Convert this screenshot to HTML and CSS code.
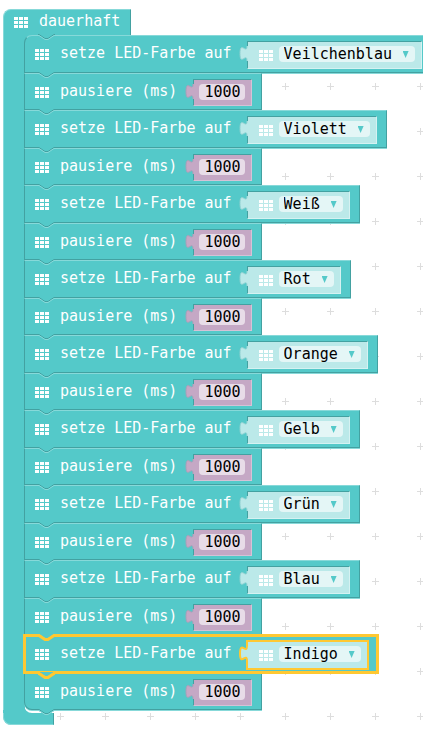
FILE: index.html
```html
<!DOCTYPE html>
<html lang="de">
<head>
<meta charset="utf-8">
<meta name="viewport" content="width=device-width, initial-scale=1">
<title>Blockeditor</title>
<link rel="stylesheet" href="styles.css">
</head>
<body>
<svg class="grid" aria-hidden="true">
  <defs>
    <pattern id="crosses" x="-7" y="-26" width="45" height="45" patternUnits="userSpaceOnUse">
      <path d="M19 22.500h7M22.500 19v7" stroke="#ddd"/>
    </pattern>
    <symbol id="matrix" viewBox="0 0 14 11">
      <path fill="#fff" d="M0 0h4v3H0zM5 0h4v3H5zM10 0h4v3h-4zM0 4h4v3H0zM5 4h4v3H5zM10 4h4v3h-4zM0 8h4v3H0zM5 8h4v3H5zM10 8h4v3h-4z"/>
    </symbol>
    <symbol id="notch" viewBox="0 0 17 9">
      <path class="notch-fill" d="M0 0v2h1l6 4h3l6-4h1V0z"/>
      <path class="notch-dark" d="M0 .5h1l6 4h3l6-4h1"/>
      <path class="notch-light" d="M0 1.500h1l6 4h3l6-4h1"/>
    </symbol>
    <symbol id="tab" viewBox="0 0 12 19">
      <path class="tab-fill" d="M10 2C10 11 3-4 3 9.500s7-2 7 7.500h2V2z"/>
      <path class="tab-edge" d="M10 2C10 11 3-4 3 9.500s7-2 7 7.500"/>
    </symbol>
  </defs>
  <rect width="100%" height="100%" fill="url(#crosses)"/>
</svg>
<main class="workspace">
  <section class="loop">
    <h1 class="head"><svg class="icon"><use href="#matrix"/></svg><span class="text">dauerhaft</span></h1>
    <ol class="stack">
      <li class="block color">
        <svg class="notch"><use href="#notch"/></svg><svg class="icon"><use href="#matrix"/></svg>
        <label class="text" for="c1">setze LED-Farbe auf</label>
        <span class="value"><svg class="tab"><use href="#tab"/></svg><svg class="icon"><use href="#matrix"/></svg><span class="drop"><select id="c1"><option>Veilchenblau</option></select></span></span>
      </li>
      <li class="block pause">
        <svg class="notch"><use href="#notch"/></svg><svg class="icon"><use href="#matrix"/></svg>
        <label class="text" for="p1">pausiere (ms)</label>
        <span class="value"><svg class="tab"><use href="#tab"/></svg><input id="p1" type="text" value="1000"></span>
      </li>
      <li class="block color">
        <svg class="notch"><use href="#notch"/></svg><svg class="icon"><use href="#matrix"/></svg>
        <label class="text" for="c2">setze LED-Farbe auf</label>
        <span class="value"><svg class="tab"><use href="#tab"/></svg><svg class="icon"><use href="#matrix"/></svg><span class="drop"><select id="c2"><option>Violett</option></select></span></span>
      </li>
      <li class="block pause">
        <svg class="notch"><use href="#notch"/></svg><svg class="icon"><use href="#matrix"/></svg>
        <label class="text" for="p2">pausiere (ms)</label>
        <span class="value"><svg class="tab"><use href="#tab"/></svg><input id="p2" type="text" value="1000"></span>
      </li>
      <li class="block color">
        <svg class="notch"><use href="#notch"/></svg><svg class="icon"><use href="#matrix"/></svg>
        <label class="text" for="c3">setze LED-Farbe auf</label>
        <span class="value"><svg class="tab"><use href="#tab"/></svg><svg class="icon"><use href="#matrix"/></svg><span class="drop"><select id="c3"><option>Weiß</option></select></span></span>
      </li>
      <li class="block pause">
        <svg class="notch"><use href="#notch"/></svg><svg class="icon"><use href="#matrix"/></svg>
        <label class="text" for="p3">pausiere (ms)</label>
        <span class="value"><svg class="tab"><use href="#tab"/></svg><input id="p3" type="text" value="1000"></span>
      </li>
      <li class="block color">
        <svg class="notch"><use href="#notch"/></svg><svg class="icon"><use href="#matrix"/></svg>
        <label class="text" for="c4">setze LED-Farbe auf</label>
        <span class="value"><svg class="tab"><use href="#tab"/></svg><svg class="icon"><use href="#matrix"/></svg><span class="drop"><select id="c4"><option>Rot</option></select></span></span>
      </li>
      <li class="block pause">
        <svg class="notch"><use href="#notch"/></svg><svg class="icon"><use href="#matrix"/></svg>
        <label class="text" for="p4">pausiere (ms)</label>
        <span class="value"><svg class="tab"><use href="#tab"/></svg><input id="p4" type="text" value="1000"></span>
      </li>
      <li class="block color">
        <svg class="notch"><use href="#notch"/></svg><svg class="icon"><use href="#matrix"/></svg>
        <label class="text" for="c5">setze LED-Farbe auf</label>
        <span class="value"><svg class="tab"><use href="#tab"/></svg><svg class="icon"><use href="#matrix"/></svg><span class="drop"><select id="c5"><option>Orange</option></select></span></span>
      </li>
      <li class="block pause">
        <svg class="notch"><use href="#notch"/></svg><svg class="icon"><use href="#matrix"/></svg>
        <label class="text" for="p5">pausiere (ms)</label>
        <span class="value"><svg class="tab"><use href="#tab"/></svg><input id="p5" type="text" value="1000"></span>
      </li>
      <li class="block color">
        <svg class="notch"><use href="#notch"/></svg><svg class="icon"><use href="#matrix"/></svg>
        <label class="text" for="c6">setze LED-Farbe auf</label>
        <span class="value"><svg class="tab"><use href="#tab"/></svg><svg class="icon"><use href="#matrix"/></svg><span class="drop"><select id="c6"><option>Gelb</option></select></span></span>
      </li>
      <li class="block pause">
        <svg class="notch"><use href="#notch"/></svg><svg class="icon"><use href="#matrix"/></svg>
        <label class="text" for="p6">pausiere (ms)</label>
        <span class="value"><svg class="tab"><use href="#tab"/></svg><input id="p6" type="text" value="1000"></span>
      </li>
      <li class="block color">
        <svg class="notch"><use href="#notch"/></svg><svg class="icon"><use href="#matrix"/></svg>
        <label class="text" for="c7">setze LED-Farbe auf</label>
        <span class="value"><svg class="tab"><use href="#tab"/></svg><svg class="icon"><use href="#matrix"/></svg><span class="drop"><select id="c7"><option>Grün</option></select></span></span>
      </li>
      <li class="block pause">
        <svg class="notch"><use href="#notch"/></svg><svg class="icon"><use href="#matrix"/></svg>
        <label class="text" for="p7">pausiere (ms)</label>
        <span class="value"><svg class="tab"><use href="#tab"/></svg><input id="p7" type="text" value="1000"></span>
      </li>
      <li class="block color">
        <svg class="notch"><use href="#notch"/></svg><svg class="icon"><use href="#matrix"/></svg>
        <label class="text" for="c8">setze LED-Farbe auf</label>
        <span class="value"><svg class="tab"><use href="#tab"/></svg><svg class="icon"><use href="#matrix"/></svg><span class="drop"><select id="c8"><option>Blau</option></select></span></span>
      </li>
      <li class="block pause">
        <svg class="notch"><use href="#notch"/></svg><svg class="icon"><use href="#matrix"/></svg>
        <label class="text" for="p8">pausiere (ms)</label>
        <span class="value"><svg class="tab"><use href="#tab"/></svg><input id="p8" type="text" value="1000"></span>
      </li>
      <li class="block color selected">
        <svg class="notch"><use href="#notch"/></svg><svg class="notch lower"><use href="#notch"/></svg><svg class="icon"><use href="#matrix"/></svg>
        <label class="text" for="c9">setze LED-Farbe auf</label>
        <span class="value"><svg class="tab"><use href="#tab"/></svg><svg class="icon"><use href="#matrix"/></svg><span class="drop"><select id="c9"><option>Indigo</option></select></span></span>
      </li>
      <li class="block pause">
        <svg class="notch"><use href="#notch"/></svg><svg class="notch lower"><use href="#notch"/></svg><svg class="icon"><use href="#matrix"/></svg>
        <label class="text" for="p9">pausiere (ms)</label>
        <span class="value"><svg class="tab"><use href="#tab"/></svg><input id="p9" type="text" value="1000"></span>
      </li>
    </ol>
    <div class="foot"><svg class="corner" viewBox="0 0 8 8"><path d="M0 0v8h8a8 8 0 0 1-8-8z"/></svg></div>
  </section>
</main>
</body>
</html>
```
FILE: styles.css
```css
* { box-sizing: border-box; }

body {
  --teal: #54c9c9;
  --teal-light: #87d9d9;
  --teal-dark: #43a1a1;
  --select: #ffc832;
  margin: 0;
  font: 15px/18px "DejaVu Sans Mono", monospace;
  color: #fff;
  background: #fff;
}

.grid {
  position: absolute;
  inset: 0;
  width: 100%;
  height: 100%;
}

.workspace {
  position: relative;
  min-height: 100vh;
  padding: 9px 0 7px 3px;
  overflow: hidden;
}

.loop { width: max-content; }

.icon {
  flex: none;
  display: block;
  width: 14px;
  height: 11px;
}

.head {
  display: flex;
  align-items: flex-start;
  gap: 11px;
  width: max-content;
  height: 26px;
  margin: 0;
  padding: 0 10px;
  font: inherit;
  background: var(--teal);
  border-top: 1px solid var(--teal-light);
  border-left: 1px solid var(--teal-light);
  border-right: 1px solid var(--teal-dark);
  border-top-left-radius: 8px;
}
.head .icon { margin-top: 7px; }
.head .text { margin-top: 2px; }

.stack {
  position: relative;
  margin: 0;
  padding: 0 0 0 21px;
  list-style: none;
}
.stack::before {
  content: "";
  position: absolute;
  inset: 0 auto 0 0;
  width: 21px;
  background: var(--teal);
  border-left: 1px solid var(--teal-light);
}

/* statement block */
.block {
  --notch-dark: var(--teal-dark);
  --notch-light: var(--teal-light);
  --notch-width: 1px;
  position: relative;
  z-index: 1;
  display: flex;
  align-items: flex-start;
  width: max-content;
  padding: 6px 10px 0 11px;
  background: var(--teal);
  box-shadow: 0 1px var(--teal-light);
}
.block::before {
  content: "";
  position: absolute;
  inset: 0;
  border: 1px solid var(--teal-dark);
  border-top-color: var(--teal-light);
}
.color { height: 38px; }
.pause { height: 37px; }
.block:first-child::before { border-top-left-radius: 8px; }
.block:last-child,
.block:last-child::before { border-bottom-left-radius: 8px; }

.block > .icon { margin: 8px 11px 0 0; }
.block > .text { margin-top: 3px; }

.notch {
  position: absolute;
  top: -1px;
  left: 14px;
  width: 17px;
  height: 9px;
}
.notch.lower { top: auto; bottom: -8px; z-index: 1; }
.notch-fill { fill: var(--teal); }
.notch-dark, .notch-light { fill: none; }
.notch-dark { stroke: var(--notch-dark); }
.notch-light { stroke: var(--notch-light); stroke-width: var(--notch-width); }

/* value block plugged into a statement */
.value {
  --plug: #bbe9e9;
  --plug-edge: #93d2d2;
  --plug-line: 1px;
  position: relative;
  display: flex;
  align-items: flex-start;
  height: 28px;
  margin-left: 15px;
  padding: 4px 6px 0 11px;
  background: var(--plug);
  border: 1px solid #d5f2f2;
  border-top-color: var(--teal-dark);
  border-left-color: var(--teal-dark);
}
.value .icon { margin: 4px 6px 0 0; }
.pause .value {
  --plug: #c5a8c5;
  --plug-edge: #a9a0b9;
  height: 27px;
  margin-left: 16px;
  padding-left: 5px;
  border-right-color: #d6c2d6;
  border-bottom-color: #d6c2d6;
}

.tab {
  position: absolute;
  top: 2px;
  left: -11px;
  width: 12px;
  height: 19px;
}
.tab-fill { fill: var(--plug); }
.tab-edge { fill: none; stroke: var(--plug-edge); stroke-width: var(--plug-line); }

select, input {
  display: block;
  height: 16px;
  margin: 0;
  padding: 0 5px;
  border: 0;
  border-radius: 4px;
  outline: 0;
  font: inherit;
  line-height: 16px;
  color: #000;
}
input { width: 46px; background: #e8dce8; }
select {
  appearance: none;
  padding-right: 22px;
  background: #e4f6f6;
}
.drop { position: relative; }
.drop::after {
  content: "";
  position: absolute;
  top: 5px;
  right: 6px;
  width: 6px;
  height: 7px;
  background: var(--teal);
  clip-path: polygon(0 0, 100% 0, 50% 100%);
  pointer-events: none;
}

/* selected block */
.selected {
  --notch-dark: var(--select);
  --notch-light: var(--select);
  --notch-width: 3px;
  z-index: 2;
}
.selected::before {
  inset: -1px;
  border: 3px solid var(--select);
}
.selected .value {
  --plug-edge: var(--select);
  --plug-line: 2px;
  border-color: var(--select);
  box-shadow: 0 0 0 1px var(--select);
}

.foot {
  position: relative;
  width: 51px;
  height: 15px;
  border-top: 3px solid transparent;
  border-bottom-left-radius: 8px;
  background: var(--teal) padding-box;
}
.foot::before {
  content: "";
  position: absolute;
  top: -3px;
  left: 0;
  width: 21px;
  height: 3px;
  background: var(--teal);
}
.foot::after {
  content: "";
  position: absolute;
  inset: 0;
  border-bottom: 1px solid var(--teal-light);
  border-left: 1px solid var(--teal-light);
  border-right: 1px solid var(--teal-dark);
  border-bottom-left-radius: 8px;
}
.corner {
  position: absolute;
  top: -8px;
  left: 21px;
  width: 8px;
  height: 8px;
  fill: var(--teal);
}
```
